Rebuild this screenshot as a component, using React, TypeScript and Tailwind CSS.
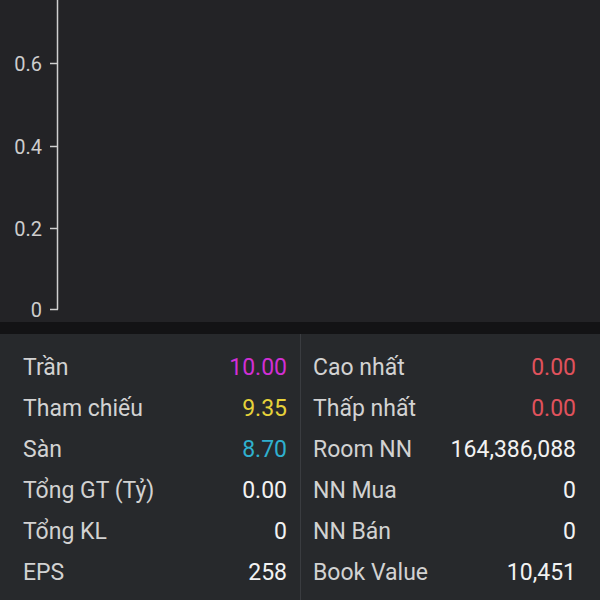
const ticks = [
  { label: "0.6", y: 63 },
  { label: "0.4", y: 146 },
  { label: "0.2", y: 228 },
  { label: "0", y: 309 },
];

type Row = { label: string; value: string; color: string };

const left: Row[] = [
  { label: "Trần", value: "10.00", color: "text-[#d12fd4]" },
  { label: "Tham chiếu", value: "9.35", color: "text-[#e6d23a]" },
  { label: "Sàn", value: "8.70", color: "text-[#2fb0cf]" },
  { label: "Tổng GT (Tỷ)", value: "0.00", color: "text-[#f2f2f2]" },
  { label: "Tổng KL", value: "0", color: "text-[#f2f2f2]" },
  { label: "EPS", value: "258", color: "text-[#f2f2f2]" },
];

const right: Row[] = [
  { label: "Cao nhất", value: "0.00", color: "text-[#e0525c]" },
  { label: "Thấp nhất", value: "0.00", color: "text-[#e0525c]" },
  { label: "Room NN", value: "164,386,088", color: "text-[#f2f2f2]" },
  { label: "NN Mua", value: "0", color: "text-[#f2f2f2]" },
  { label: "NN Bán", value: "0", color: "text-[#f2f2f2]" },
  { label: "Book Value", value: "10,451", color: "text-[#f2f2f2]" },
];

function Column({ rows, className }: { rows: Row[]; className: string }) {
  return (
    <div className={"flex flex-col pt-[14px] " + className}>
      {rows.map((r) => (
        <div key={r.label} className="flex h-[41px] items-center justify-between">
          <span className="text-[#d2d2d2]">{r.label}</span>
          <span className={r.color}>{r.value}</span>
        </div>
      ))}
    </div>
  );
}

export default function App() {
  return (
    <div className="flex h-[600px] w-[600px] flex-col overflow-hidden bg-[#27292c] font-['Roboto',sans-serif]">
      <div className="relative h-[322px] shrink-0 bg-[#232326]">
        <svg className="absolute inset-0" width="600" height="322">
          <line x1="57.5" y1="0" x2="57.5" y2="309.5" stroke="#cfcfcf" strokeWidth="1.5" />
          {ticks.map((t) => (
            <line key={t.label} x1="50" y1={t.y + 0.5} x2="58" y2={t.y + 0.5} stroke="#cfcfcf" strokeWidth="1.5" />
          ))}
        </svg>
        {ticks.map((t) => (
          <div
            key={t.label}
            className="absolute right-[558px] text-[20px] leading-none text-[#cdcdcd]"
            style={{ top: t.y - 9 }}
          >
            {t.label}
          </div>
        ))}
      </div>
      <div className="h-[12px] shrink-0 bg-[#131315]" />
      <div className="flex flex-1 text-[23px]">
        <Column rows={left} className="w-[301px] pl-[23px] pr-[13px] border-r border-[#3a3c40]" />
        <Column rows={right} className="flex-1 pl-[12px] pr-[24px]" />
      </div>
    </div>
  );
}
